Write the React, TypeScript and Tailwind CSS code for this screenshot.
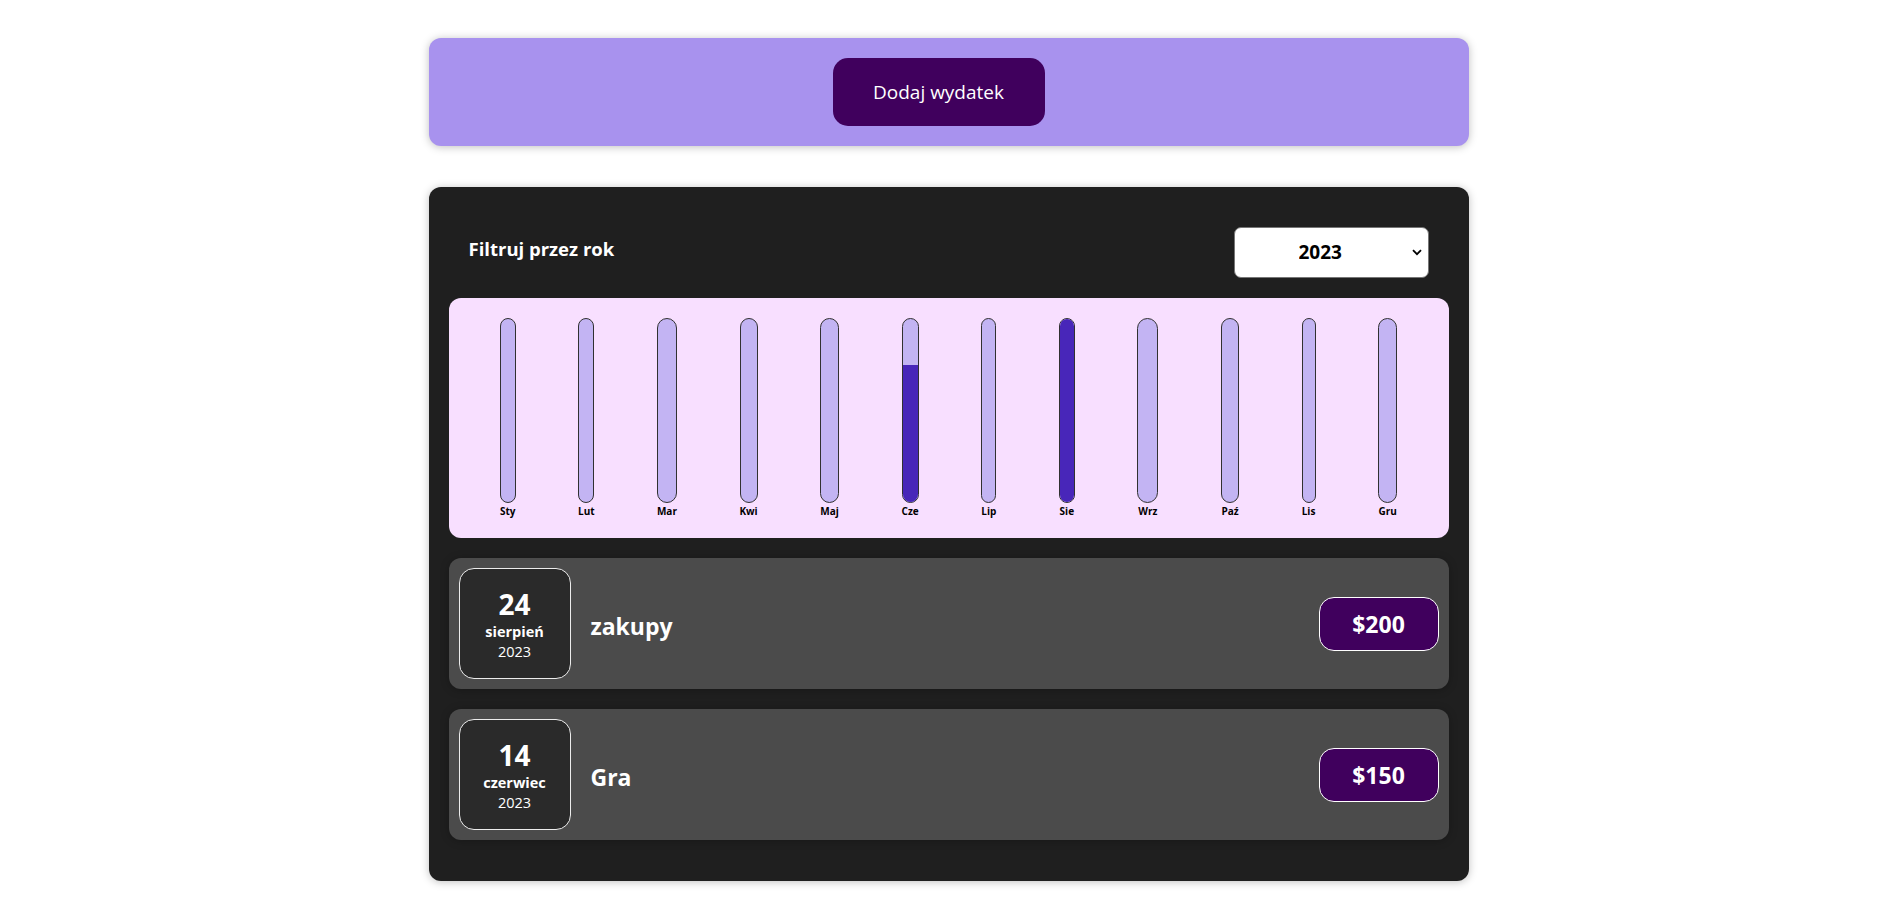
import React from 'react';

interface Expense {
  id: string;
  title: string;
  amount: number;
  day: string;
  month: string;
  year: string;
}

const expenses: Expense[] = [
  { id: 'e1', title: 'zakupy', amount: 200, day: '24', month: 'sierpień', year: '2023' },
  { id: 'e2', title: 'Gra', amount: 150, day: '14', month: 'czerwiec', year: '2023' },
];

// bar widths follow the label widths of the original chart
const months = [
  { label: 'Sty', w: 'w-[16px]', fill: 0 },
  { label: 'Lut', w: 'w-[16px]', fill: 0 },
  { label: 'Mar', w: 'w-[20px]', fill: 0 },
  { label: 'Kwi', w: 'w-[18px]', fill: 0 },
  { label: 'Maj', w: 'w-[19px]', fill: 0 },
  { label: 'Cze', w: 'w-[17px]', fill: 150 },
  { label: 'Lip', w: 'w-[15px]', fill: 0 },
  { label: 'Sie', w: 'w-[16px]', fill: 200 },
  { label: 'Wrz', w: 'w-[21px]', fill: 0 },
  { label: 'Paź', w: 'w-[18px]', fill: 0 },
  { label: 'Lis', w: 'w-[14px]', fill: 0 },
  { label: 'Gru', w: 'w-[19px]', fill: 0 },
];

const maxValue = 200;

function ChartBar({ label, w, fill }: { label: string; w: string; fill: number }) {
  const pct = Math.round((fill / maxValue) * 100) + '%';
  return (
    <div className={`flex flex-col items-center ${w}`}>
      <div className="flex h-[185px] w-full flex-col justify-end overflow-hidden rounded-[15px] border border-[#313131] bg-[#c3b4f3]">
        <div className="w-full bg-[#4826b9]" style={{ height: pct }}></div>
      </div>
      <div className="whitespace-nowrap pt-[1px] text-[10px] font-bold leading-[14px] text-black">{label}</div>
    </div>
  );
}

function ExpenseItem({ expense }: { expense: Expense }) {
  return (
    <div className="mt-[20px] flex h-[131px] items-center rounded-[12px] bg-[#4b4b4b] p-[10px] shadow-[0_1px_8px_rgba(0,0,0,0.25)]">
      <div className="flex h-[111px] w-[112px] shrink-0 flex-col items-center justify-center rounded-[15px] border border-[#ececec] bg-[#2a2a2a] text-white">
        <div className="text-[28px] font-bold leading-[36px]">{expense.day}</div>
        <div className="text-[14.5px] font-bold leading-[20px]">{expense.month}</div>
        <div className="text-[14.5px] leading-[20px]">{expense.year}</div>
      </div>
      <h2 className="ml-[20px] flex-1 pt-[5px] text-[23px] font-bold text-white">{expense.title}</h2>
      <div className="flex h-[54px] w-[120px] items-center justify-center rounded-[15px] border border-white bg-[#40005d] pt-[2px] text-[23px] font-bold text-white">
        ${expense.amount}
      </div>
    </div>
  );
}

export default function App() {
  return (
    <div className="min-h-screen bg-white pb-[20px] pt-[38px]" style={{ fontFamily: '"Open Sans", "Noto Sans", sans-serif' }}>
      {/* New expense */}
      <div className="mx-auto w-[1040px] translate-x-[2px] rounded-[12px] bg-[#a892ee] p-[20px] text-center shadow-[0_1px_8px_rgba(0,0,0,0.25)]">
        <button className="mr-[20px] h-[68px] w-[212px] rounded-[15px] bg-[#40005d] text-[19px] text-white">Dodaj wydatek</button>
      </div>

      {/* Expenses */}
      <div className="mx-auto mt-[41px] w-[1040px] translate-x-[2px] rounded-[12px] bg-[#1f1f1f] p-[20px] shadow-[0_1px_8px_rgba(0,0,0,0.25)]">
        <div className="my-[20px] flex items-center justify-between px-[20px]">
          <label className="mb-[8px] text-[18.5px] font-bold text-white">Filtruj przez rok</label>
          <div className="relative">
            <select
              defaultValue="2023"
              className="h-[51px] w-[195px] appearance-none rounded-[7px] border border-[#767676] bg-white pl-[64px] text-[19px] font-bold text-black outline-none"
            >
              <option value="2023">2023</option>
              <option value="2022">2022</option>
              <option value="2021">2021</option>
              <option value="2020">2020</option>
            </select>
            <svg className="pointer-events-none absolute right-[7px] top-[22px]" width="10" height="7" viewBox="0 0 10 7">
              <path d="M1 1.2 L5 5.2 L9 1.2" fill="none" stroke="#000" strokeWidth="1.8" />
            </svg>
          </div>
        </div>

        <div className="flex h-[240px] justify-around rounded-[12px] bg-[#f8dfff] p-[20px]">
          {months.map((m) => (
            <ChartBar key={m.label} label={m.label} w={m.w} fill={m.fill} />
          ))}
        </div>

        {expenses.map((e) => (
          <ExpenseItem key={e.id} expense={e} />
        ))}
        <div className="h-[21px]"></div>
      </div>
    </div>
  );
}
